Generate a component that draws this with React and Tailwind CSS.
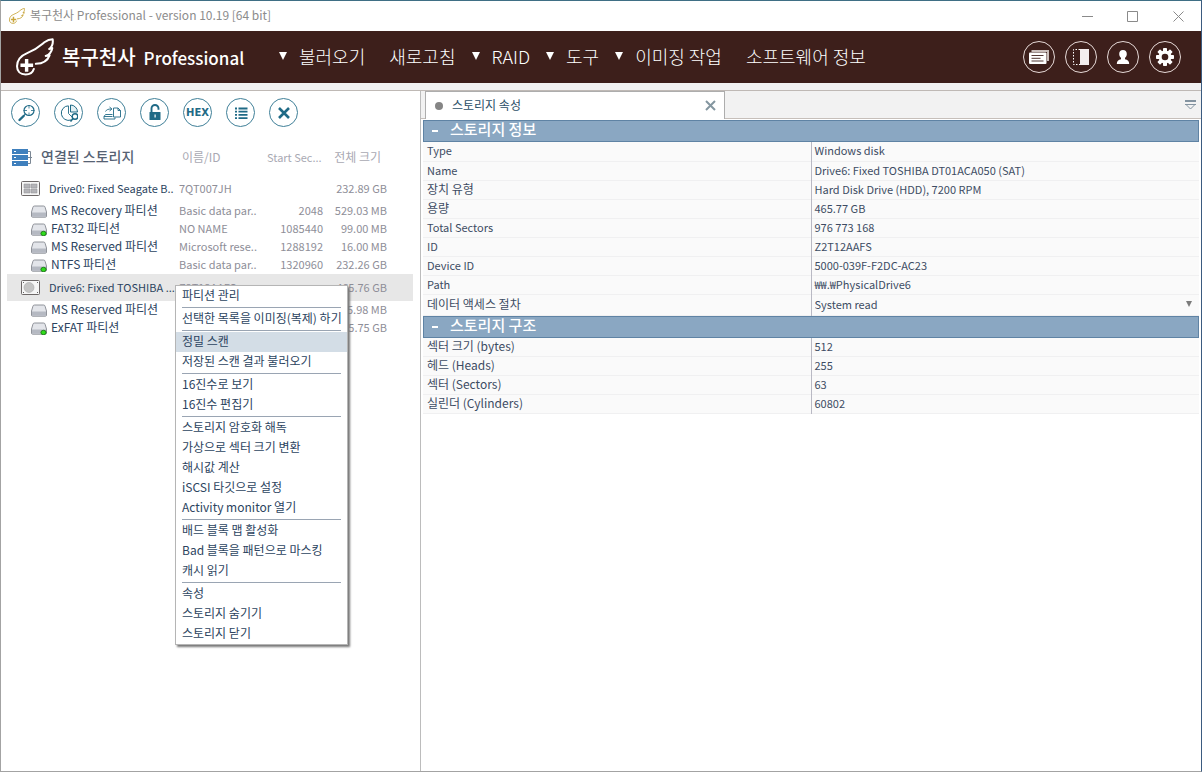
import React, { useState } from 'react';

const MENU = [
  { label: '불러오기', arrow: true },
  { label: '새로고침', arrow: false },
  { label: 'RAID', arrow: true },
  { label: '도구', arrow: true },
  { label: '이미징 작업', arrow: true },
  { label: '소프트웨어 정보', arrow: false },
];

const STORAGES = [
  { type: 'array', name: 'Drive0: Fixed Seagate B..', id: '7QT007JH', start: '', size: '232.89 GB' },
  { type: 'part', name: 'MS Recovery 파티션', id: 'Basic data par..', start: '2048', size: '529.03 MB' },
  { type: 'fs', name: 'FAT32 파티션', id: 'NO NAME', start: '1085440', size: '99.00 MB' },
  { type: 'part', name: 'MS Reserved 파티션', id: 'Microsoft rese..', start: '1288192', size: '16.00 MB' },
  { type: 'fs', name: 'NTFS 파티션', id: 'Basic data par..', start: '1320960', size: '232.26 GB' },
  { type: 'disk', name: 'Drive6: Fixed TOSHIBA ...', id: 'Z2T12AAFS', start: '', size: '465.76 GB' },
  { type: 'part', name: 'MS Reserved 파티션', id: '', start: '', size: '15.98 MB' },
  { type: 'fs', name: 'ExFAT 파티션', id: '', start: '', size: '465.75 GB' },
];

const CONTEXT_MENU = [
  ['파티션 관리'],
  ['선택한 목록을 이미징(복제) 하기'],
  ['정밀 스캔', '저장된 스캔 결과 불러오기'],
  ['16진수로 보기', '16진수 편집기'],
  ['스토리지 암호화 해독', '가상으로 섹터 크기 변환', '해시값 계산', 'iSCSI 타깃으로 설정', 'Activity monitor 열기'],
  ['배드 블록 맵 활성화', 'Bad 블록을 패턴으로 마스킹', '캐시 읽기'],
  ['속성', '스토리지 숨기기', '스토리지 닫기'],
];

const STORAGE_INFO = [
  ['Type', 'Windows disk'],
  ['Name', 'Drive6: Fixed TOSHIBA DT01ACA050 (SAT)'],
  ['장치 유형', 'Hard Disk Drive (HDD), 7200 RPM'],
  ['용량', '465.77 GB'],
  ['Total Sectors', '976 773 168'],
  ['ID', 'Z2T12AAFS'],
  ['Device ID', '5000-039F-F2DC-AC23'],
  ['Path', '₩₩.₩PhysicalDrive6'],
];

const STORAGE_GEOMETRY = [
  ['섹터 크기 (bytes)', '512'],
  ['헤드 (Heads)', '255'],
  ['섹터 (Sectors)', '63'],
  ['실린더 (Cylinders)', '60802'],
];

function Wing({ className }) {
  return (
    <svg viewBox="0 0 111 110" className={className} fill="none" stroke="currentColor" aria-hidden="true">
      <path
        d="M52 90c-3 10-12 16-24 16C13 106 3 97 3 82c0-22 14-32 31-39C60 33 71 22 83 12 91 6 100 3 107 3c2 11-1 21-10 29l9-3c-2 12-9 19-19 23l11-2c-5 14-19 24-40 25"
        strokeWidth="6"
        strokeLinejoin="round"
        strokeLinecap="round"
      />
      <path d="M31 61v37M13 79h37" strokeWidth="10" />
    </svg>
  );
}

/* --- Icônes de l'en-tête --- */
function CardsIcon() {
  return (
    <svg viewBox="0 0 20 20" className="size-5">
      <path d="M2.500 4h16.500v10" fill="none" stroke="#cbbfbc" strokeWidth="2" />
      <rect x="0" y="5.500" width="17.500" height="11.500" rx="1" fill="#fff" />
      <path d="M2.500 8.500h12M2.500 11.300h9M2.500 14h12" stroke="#3d1f1b" strokeWidth="0.900" />
    </svg>
  );
}

function SplitIcon() {
  return (
    <svg viewBox="0 0 20 20" className="size-5">
      <path d="M9 2.500H2.500v15H9" fill="none" stroke="#fff" strokeWidth="1" strokeDasharray="1.500 1.500" />
      <rect x="9" y="2" width="9" height="16" fill="#f3eeee" />
    </svg>
  );
}

function UserIcon() {
  return (
    <svg viewBox="0 0 20 20" className="size-5" fill="#fff">
      <path d="M10 3c2.400 0 3.800 1.700 3.800 3.900 0 1.700-.8 3-1.800 3.900v1.400c2.600.5 4.200 1.800 4.200 4.800H3.800c0-3 1.600-4.300 4.200-4.800v-1.400c-1-.9-1.800-2.200-1.800-3.900C6.200 4.700 7.600 3 10 3z" />
    </svg>
  );
}

function GearIcon() {
  return (
    <svg viewBox="0 0 20 20" className="size-5">
      {[0, 45, 90, 135].map((a) => (
        <rect key={a} x="8" y="1" width="4" height="18" rx="0.8" fill="#fff" transform={`rotate(${a} 10 10)`} />
      ))}
      <circle cx="10" cy="10" r="6.500" fill="#fff" />
      <circle cx="10" cy="10" r="3.300" fill="#3d1f1b" />
    </svg>
  );
}

/* --- Icônes de la barre d'outils --- */
const TOOLS = [
  {
    label: '검색',
    icon: (
      <g fill="none">
        <circle cx="12" cy="6.500" r="5" strokeWidth="1.200" />
        <path d="M12 1v3.500M12 8.500V12M6.500 6.500H10M14 6.500h3.500" strokeWidth="0.800" />
        <path d="M8.300 10.200L6.500 12" strokeWidth="1.200" />
        <path d="M6.600 12L2.500 16" strokeWidth="2.400" strokeLinecap="round" />
      </g>
    ),
  },
  {
    label: '파티션 분석',
    icon: (
      <g fill="none">
        <path d="M8.500 1.800A7.300 7.300 0 1 0 11 16" strokeWidth="1" />
        <path d="M8.500 2v7.500l4 4" strokeWidth="0.900" />
        <path d="M10.500 1v7h7A7 7 0 0 0 10.500 1z" strokeWidth="1" fill="#e3f0f4" />
        <circle cx="15" cy="12.500" r="2.800" strokeWidth="1.400" fill="#fff" />
        <path d="M13 14.500L10.500 17.500" strokeWidth="1.600" />
      </g>
    ),
  },
  {
    label: '이미지 만들기',
    icon: (
      <g fill="none" strokeWidth="0.900">
        <path d="M9.500 10.500H2.500L1 12.500v2.500h11v-1.500M1 12.500h8.500" />
        <path d="M10.500 4h4.500l2.500 2.500v6.500h-7zM15 4v2.500h2.500" />
        <path d="M2.500 7.500C3.500 5.500 5.500 5 8 5M6.500 3L9 5 6.500 7" />
      </g>
    ),
  },
  {
    label: '암호화 해제',
    icon: (
      <g>
        <path d="M5.500 8.500V4.500a3.500 3.500 0 0 1 7 0v1.300" fill="none" strokeWidth="1.900" />
        <rect x="3.500" y="8" width="11" height="8" rx="0.500" fill="#1f6a86" stroke="none" />
        <rect x="8.500" y="10.500" width="1.200" height="3" fill="#fff" stroke="none" />
      </g>
    ),
  },
  { label: 'HEX', icon: null },
  {
    label: '목록',
    icon: (
      <g fill="none" strokeWidth="1.800">
        <path d="M3 4.500h2M3 7.700h2M3 10.900h2M3 14.100h2" />
        <path d="M6.500 4.500h9M6.500 7.700h9M6.500 10.900h9M6.500 14.100h9" />
      </g>
    ),
  },
  { label: '닫기', icon: <path d="M4 4l10 10M14 4L4 14" strokeWidth="2.600" fill="none" /> },
];

function DriveIcon({ type }) {
  if (type === 'array' || type === 'disk') {
    return (
      <svg viewBox="0 0 19 15" className="h-[15px] w-[19px] shrink-0">
        <rect x="0.500" y="0.500" width="18" height="14" rx="1" fill="#f6f6f6" stroke="#6d6868" />
        {type === 'array' ? (
          <path d="M3 3h6v4H3zM10 3h6v4h-6zM3 8h6v4H3zM10 8h6v4h-6z" fill="#b4b4b8" stroke="#8f8f93" strokeWidth="0.500" />
        ) : (
          <g fill="#666">
            <circle cx="8" cy="7.500" r="5" fill="#c4c4c4" stroke="#a9a9a9" strokeWidth="0.600" />
            <path d="M2 2h1v1H2zM16 2h1v1h-1zM2 12h1v1H2zM16 12h1v1h-1z" />
          </g>
        )}
      </svg>
    );
  }
  return (
    <svg viewBox="0 0 16 13" className="h-[13px] w-4 shrink-0">
      <path d="M3.500 1h9c1 0 1.300.4 1.600 1.300L15.500 7v4c0 .8-.4 1.200-1.200 1.200H1.700C.9 12.200.5 11.800.5 11V7l1.400-4.700C2.200 1.400 2.500 1 3.500 1z" fill="#e3e5ea" stroke="#858890" strokeWidth="0.900" />
      <path d="M1 7.500h14v3.300c0 .6-.3.900-.9.900H1.900c-.6 0-.9-.3-.9-.9z" fill="#b5b9c2" />
      {type === 'fs' && <ellipse cx="12.500" cy="10.500" rx="2.600" ry="2.200" fill="#2fdc1c" stroke="#11700b" strokeWidth="0.800" />}
    </svg>
  );
}

function StorageIcon() {
  return (
    <svg viewBox="0 0 20 17" className="h-[17px] w-5 shrink-0">
      <path d="M16 2.500h2.500v12H16M16 8.500h4" fill="none" stroke="#7b8794" />
      {[0, 6, 12].map((y) => (
        <g key={y}>
          <rect x="0" y={y} width="16" height="5" fill="#3f80bd" />
          <rect x="2" y={y + 2} width="2" height="1" fill="#fff" />
        </g>
      ))}
    </svg>
  );
}

function Section({ title, children }) {
  return (
    <section>
      <h2 className="flex h-[22px] items-center border border-[#5f83a4] bg-[#8aa7c2] pb-1 text-[15px] font-medium leading-5 text-white">
        <button className="flex items-center" aria-label={`${title} 접기`}>
          <span className="ml-2 mr-3 mt-1 h-[2px] w-[6px] bg-white"></span>
        </button>
        {title}
      </h2>
      <table className="w-full table-fixed border-collapse bg-[#fafafa] text-[#3d4c63]">
        <tbody>{children}</tbody>
      </table>
    </section>
  );
}

// les libellés latins sont plus petits que les libellés coréens
const isLatin = (text) => typeof text === 'string' && !/[가-힣]/.test(text);

function PropRow({ label, children }) {
  return (
    <tr className="h-[19px] border-b border-[#f0f0f1]">
      <th className={`border-r border-[#b9b9c4] pb-0.5 pl-1 pt-0 text-left font-normal ${isLatin(label) ? 'text-[11px]' : ''}`}>{label}</th>
      <td className="pb-0.5 pl-[3px] pt-0 text-[11px]">{children}</td>
    </tr>
  );
}

export default function App() {
  const [selected, setSelected] = useState(5);
  const [access, setAccess] = useState('System read');

  return (
    <div className="relative flex min-h-screen flex-col border border-t-[#3f6f85] border-r-[#3b5b80] border-b-[#a3a3a3] border-l-[#a3a3a3] bg-white font-['Noto_Sans_CJK_KR',sans-serif] text-xs leading-4">
      {/* Barre de titre */}
      <div className="flex h-[30px] items-center pl-2 text-[#8c8c8c]">
        <Wing className="mr-[5px] size-4 text-[#c9a63c]" />
        <span className="flex-1 pb-0.5">복구천사 Professional - version 10.19 [64 bit]</span>
        <button className="flex w-[45px] justify-center" aria-label="최소화">
          <svg viewBox="0 0 11 11" className="size-[11px]" stroke="#8a8a8a"><path d="M0 5.500h11" /></svg>
        </button>
        <button className="flex w-[45px] justify-center" aria-label="최대화">
          <svg viewBox="0 0 11 11" className="size-[11px]" stroke="#8a8a8a" fill="none"><path d="M.5.5h10v10H.5z" /></svg>
        </button>
        <button className="flex w-[46px] justify-center" aria-label="창 닫기">
          <svg viewBox="0 0 11 11" className="size-[11px]" stroke="#8a8a8a"><path d="M.5.5l10 10M10.500.5l-10 10" /></svg>
        </button>
      </div>

      {/* En-tête */}
      <header className="flex h-[52px] items-center bg-[#3d1f1b] pl-[15px] pr-5 text-white">
        <Wing className="size-[38px]" />
        <div className="ml-2 flex w-[217px] items-baseline gap-2 font-medium">
          <span className="text-xl">복구천사</span>
          <span className="text-[17px]">Professional</span>
        </div>
        <nav className="flex flex-1 items-center gap-4 pb-0.5 text-lg font-light">
          {MENU.map((item) => (
            <button key={item.label} className={`flex items-center gap-3 whitespace-nowrap ${item.arrow ? '' : 'pl-2'}`}>
              {item.arrow && (
                <svg viewBox="0 0 7 7" className="size-2 fill-white"><path d="M0 0h7L3.500 7z" /></svg>
              )}
              {item.label}
            </button>
          ))}
        </nav>
        <div className="flex gap-[10px]">
          {[['알림', CardsIcon], ['화면 분할', SplitIcon], ['사용자', UserIcon], ['설정', GearIcon]].map(([label, Icon]) => (
            <button key={label} aria-label={label} className="flex size-8 items-center justify-center rounded-full border border-[#e6d9d7]">
              <Icon />
            </button>
          ))}
        </div>
      </header>
      <div className="h-2 border-b border-[#bfb9b5] bg-[#f2f2f2]"></div>

      <div className="flex flex-1">
        {/* Panneau gauche */}
        <aside className="w-[35%] shrink-0 border-r border-[#bcbcbc] pl-[6px] pr-[7px]">
          <div className="flex gap-[14px] pl-1 pt-[7px]">
            {TOOLS.map((t) => (
              <button key={t.label} aria-label={t.label} className="flex size-[29px] items-center justify-center rounded-full border border-[#3f7f98] text-[#1f6a86]">
                {t.icon ? (
                  <svg viewBox="0 0 18 18" className="size-[18px]" stroke="currentColor">{t.icon}</svg>
                ) : (
                  <span className="font-['DejaVu_Sans',sans-serif] text-[10px] font-bold">HEX</span>
                )}
              </button>
            ))}
          </div>

          <table className="mt-3 w-full table-fixed border-collapse text-[11px] text-[#8e8e98]">
            <colgroup>
              <col />
              <col className="w-[84px]" />
              <col className="w-[60px]" />
              <col className="w-16" />
              <col className="w-[26px]" />
            </colgroup>
            <thead>
              <tr className="h-9 text-left text-[#a9a9b3]">
                <th className="p-0">
                  <div className="flex items-center gap-[9px] pl-[5px] text-sm font-medium text-[#566273]">
                    <StorageIcon />
                    <span className="pb-0.5">연결된 스토리지</span>
                  </div>
                </th>
                <th className="p-0 pl-[3px] text-xs font-normal">이름/ID</th>
                <th className="whitespace-nowrap p-0 pl-1 font-normal">Start Sec...</th>
                <th className="p-0 text-right text-xs font-normal"><span className="mr-[6px]">전체 크기</span></th>
                <th className="p-0"></th>
              </tr>
            </thead>
            <tbody>
              {STORAGES.map((s, i) => {
                const isDrive = s.type === 'array' || s.type === 'disk';
                return (
                  <tr key={i} onClick={() => setSelected(i)} className={`${isDrive ? 'h-[27px]' : 'h-[18px]'} ${selected === i ? 'bg-[#e7e7e7]' : ''}`}>
                    <td className="p-0">
                      <div className={`flex items-center whitespace-nowrap text-[#2c4460] ${isDrive ? 'gap-[9px] pl-[14px]' : 'gap-1 pl-6'}`}>
                        <DriveIcon type={s.type} />
                        <span className={isDrive ? 'pb-0.5' : 'pb-0.5 text-xs'}>{s.name}</span>
                      </div>
                    </td>
                    <td className="whitespace-nowrap p-0 pb-0.5">{s.id}</td>
                    <td className="p-0 pb-0.5 text-right">{s.start}</td>
                    <td className="whitespace-nowrap p-0 pb-0.5 text-right">{s.size}</td>
                    <td className="p-0"></td>
                  </tr>
                );
              })}
            </tbody>
          </table>
        </aside>

        {/* Panneau droit */}
        <main className="min-w-0 flex-1">
          <div className="flex h-7 items-stretch border-b border-[#c6bfba] bg-[#f2f2f2] pl-1">
            <div className="-mb-px flex w-[300px] items-center border-x border-t border-[#adadad] bg-white pl-[9px] pr-2 text-[#2c5068]">
              <span className="mr-[9px] size-2 rounded-full bg-[#858585]"></span>
              <span className="flex-1 pb-0.5">스토리지 속성</span>
              <button aria-label="탭 닫기">
                <svg viewBox="0 0 11 11" className="size-[11px]" stroke="#8496a0" strokeWidth="2"><path d="M1 1l9 9M10 1l-9 9" /></svg>
              </button>
            </div>
            <button className="ml-auto mr-[5px]" aria-label="탭 목록">
              <svg viewBox="0 0 11 10" className="h-[10px] w-[11px]" fill="none" stroke="#8393a0">
                <path d="M0 1h11" strokeWidth="2" />
                <path d="M0 4.500h11M1.500 5L5.500 9l4-4" />
              </svg>
            </button>
          </div>

          <div className="px-[2px] pt-px">
            <Section title="스토리지 정보">
              {STORAGE_INFO.map(([k, v]) => (
                <PropRow key={k} label={k}>{v}</PropRow>
              ))}
              <PropRow label={<label htmlFor="access">데이터 액세스 절차</label>}>
                <div className="flex h-[18px] items-center pr-[7px]">
                  <select id="access" value={access} onChange={(e) => setAccess(e.target.value)} className="h-[18px] flex-1 appearance-none bg-transparent outline-none">
                    <option>System read</option>
                    <option>Direct read</option>
                  </select>
                  <svg viewBox="0 0 6 6" className="size-[6px] fill-[#7b7b7b]"><path d="M0 0h6L3 6z" /></svg>
                </div>
              </PropRow>
            </Section>
            <Section title="스토리지 구조">
              {STORAGE_GEOMETRY.map(([k, v]) => (
                <PropRow key={k} label={k}>{v}</PropRow>
              ))}
            </Section>
          </div>
        </main>
      </div>

      {/* Menu contextuel */}
      <div role="menu" className="absolute left-[174px] top-[284px] w-[173px] border border-[#b5b5b5] bg-white text-[#2c4460] shadow-[2px_2px_2px_#777]">
        {CONTEXT_MENU.map((group, g) => (
          <div key={g} role="group">
            {g > 0 && <hr className="mx-[6px] my-px border-[#9aa5b3]" />}
            {group.map((item) => (
              <button key={item} role="menuitem" className={`block h-5 w-full whitespace-nowrap pb-0.5 pl-[6px] text-left ${item === '정밀 스캔' ? 'bg-[#d3dde6]' : 'hover:bg-[#d3dde6]'}`}>
                {item}
              </button>
            ))}
          </div>
        ))}
      </div>
    </div>
  );
}
